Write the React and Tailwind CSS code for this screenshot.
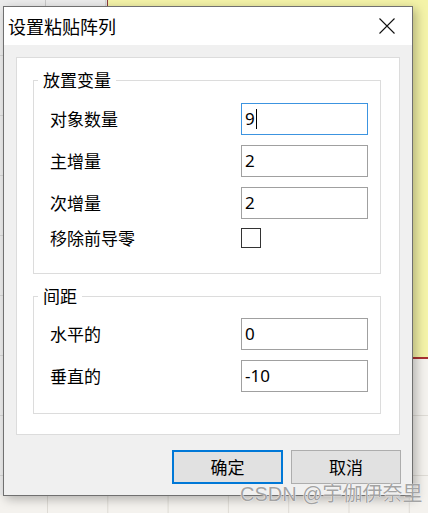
export default function App() {
  const cjk = "font-['Microsoft_YaHei','Noto_Sans_CJK_SC',sans-serif]";
  const num = "font-['Noto_Sans','Noto_Sans_CJK_SC',sans-serif]";
  return (
    <div className={`relative w-[428px] h-[513px] overflow-hidden bg-[#f4f2ee] ${cjk}`}>
      {/* canvas grid */}
      <div className="absolute inset-0 bg-[linear-gradient(to_right,#dedbd5_1px,transparent_1px),linear-gradient(to_bottom,#dedbd5_1px,transparent_1px)] bg-size-[60.3px_60px] bg-position-[47px_55px]" />
      {/* left gray column */}
      <div className="absolute left-0 top-0 w-[107px] h-[495px] bg-[#ececec] bg-[linear-gradient(to_right,#c9c9c9_1px,transparent_1px),linear-gradient(to_bottom,#d6d6d6_1px,transparent_1px)] bg-size-[60.3px_60px] bg-position-[45px_55px]" />
      {/* yellow sheet */}
      <div className="absolute left-[107px] top-0 right-0 h-[359px] bg-[#f4f3a8] border-l border-l-[#8c3b3b] border-b-2 border-b-[#a83232]" />

      {/* dialog window */}
      <div className="absolute left-[3px] top-[6px] w-[410px] h-[490px] flex flex-col border border-[#707070] bg-[#f0f0f0] shadow-[3px_3px_10px_rgba(0,0,0,0.28)]">
        {/* title bar */}
        <div className="h-[38px] shrink-0 bg-white flex items-center justify-between pl-[4px] pr-[17px]">
          <span className="text-[18px] leading-[22px] text-black">设置粘贴阵列</span>
          <svg width="16" height="16" viewBox="0 0 16 16" className="block">
            <path d="M0.5 0.5 L15.5 15.5 M15.5 0.5 L0.5 15.5" stroke="#111" strokeWidth="1.1" fill="none" />
          </svg>
        </div>

        {/* body */}
        <div className="flex flex-col px-[12px] pt-[12px]">
          <div className="h-[378px] border border-[#dcdcdc] bg-white pt-[12px] flex flex-col">
            {/* group 1 */}
            <fieldset className="ml-[16px] w-[348px] border border-[#dcdcdc] pb-[25px]">
              <legend className="ml-[4px] px-[5px] text-[17px] leading-[20px] text-black">放置变量</legend>
              <div className="flex flex-col pt-[13px]">
                <Row label="对象数量" value="9" focused num={num} />
                <div className="h-[10px]" />
                <Row label="主增量" value="2" num={num} />
                <div className="h-[10px]" />
                <Row label="次增量" value="2" num={num} />
                <div className="mt-[9px] h-[20px] flex items-center pl-[16px]">
                  <span className="w-[191px] text-[17px] leading-[20px] text-black">移除前导零</span>
                  <div className="w-[20px] h-[20px] border-[1.5px] border-[#333] bg-white" />
                </div>
              </div>
            </fieldset>

            {/* group 2 */}
            <fieldset className="mt-[12px] ml-[16px] w-[348px] border border-[#dcdcdc] pb-[21px]">
              <legend className="ml-[4px] px-[5px] text-[17px] leading-[20px] text-black">间距</legend>
              <div className="flex flex-col pt-[12px]">
                <Row label="水平的" value="0" num={num} />
                <div className="h-[10px]" />
                <Row label="垂直的" value="-10" num={num} />
              </div>
            </fieldset>
          </div>

          {/* buttons */}
          <div className="mt-[15px] flex justify-end gap-[8px] -mr-[1px]">
            <button className="w-[111px] h-[34px] border-2 border-[#0078d7] bg-[#e1e1e1] text-[17px] leading-[20px] text-black">确定</button>
            <button className="w-[110px] h-[34px] border border-[#adadad] bg-[#e1e1e1] text-[17px] leading-[20px] text-black">取消</button>
          </div>
        </div>
      </div>

      {/* watermark */}
      <div className="absolute left-[240px] top-[481px] text-[20px] leading-[24px] text-[#a3a3a3] whitespace-nowrap [text-shadow:0_0_1px_#fff,0_0_1px_#fff]">
        <span className="font-['Liberation_Sans',sans-serif]">CSDN @</span>宇伽伊奈里
      </div>
    </div>
  );
}

function Row({ label, value, focused, num }) {
  return (
    <div className="h-[32px] flex items-center pl-[16px]">
      <span className="w-[191px] text-[17px] leading-[20px] text-black">{label}</span>
      <div
        className={`w-[127px] h-[32px] flex items-center pl-[3px] bg-white border ${
          focused ? "border-[#3c94e0]" : "border-[#a0a0a0]"
        } ${num} text-[17px] leading-[20px] text-black`}
      >
        {value}
        {focused && <span className="ml-[1px] w-[1px] h-[20px] bg-black" />}
      </div>
    </div>
  );
}
